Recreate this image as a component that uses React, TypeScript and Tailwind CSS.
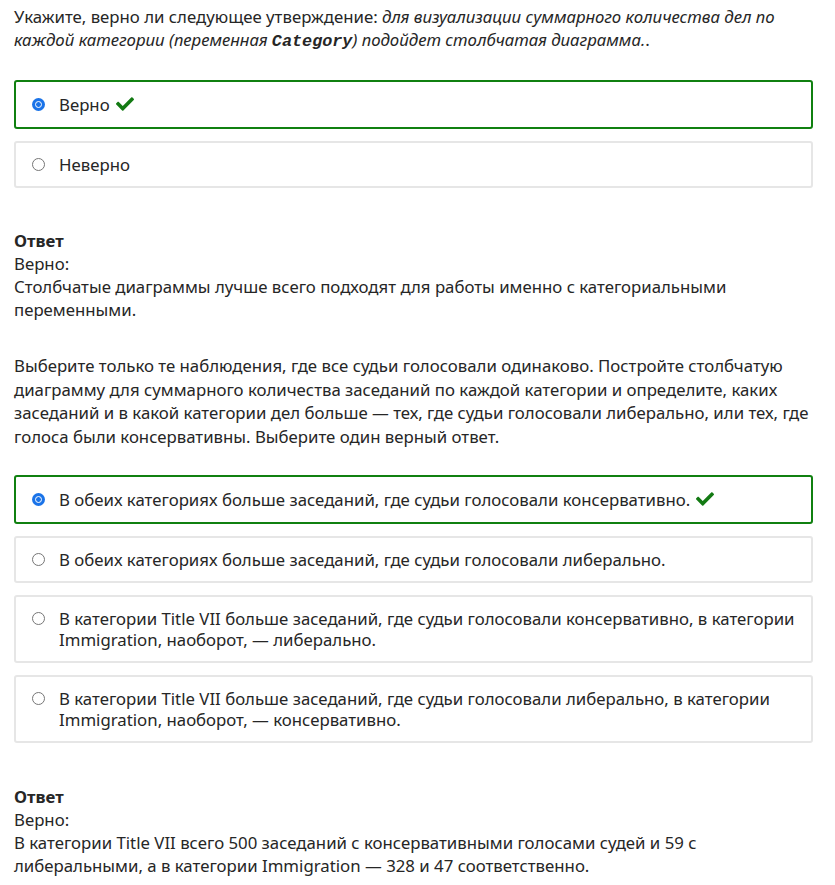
import React from "react";
import { FaCheck } from "react-icons/fa";

type Option = {
  text: string;
  selected?: boolean;
};

function Radio({ checked }: { checked?: boolean }) {
  if (checked) {
    return (
      <span className="mt-[4px] flex h-[13px] w-[13px] shrink-0 items-center justify-center rounded-full bg-[#1a73e8]">
        <span className="h-[7px] w-[7px] rounded-full border-[1.5px] border-white bg-[#1a73e8]" />
      </span>
    );
  }
  return (
    <span className="mt-[4px] h-[13px] w-[13px] shrink-0 rounded-full border border-[#767676] bg-white" />
  );
}

function OptionBox({ option }: { option: Option }) {
  return (
    <div
      className={
        option.selected
          ? "flex items-start gap-[14px] rounded-[3px] border-2 border-[#108010] px-[16px] py-[12px]"
          : "flex items-start gap-[14px] rounded-[3px] border-2 border-[#e6e6e6] px-[16px] py-[11px]"
      }
    >
      <Radio checked={option.selected} />
      <div className="leading-[21px]">
        {option.text}
        {option.selected && (
          <FaCheck className="ml-[6px] inline-block align-[-2px] text-[18px] text-[#137a13]" />
        )}
      </div>
    </div>
  );
}

function Answer({ lines }: { lines: string }) {
  return (
    <div className="leading-[23px]">
      <div className="font-bold">Ответ</div>
      <div>Верно:</div>
      <div>{lines}</div>
    </div>
  );
}

export default function App() {
  const first: Option[] = [{ text: "Верно", selected: true }, { text: "Неверно" }];
  const second: Option[] = [
    {
      text: "В обеих категориях больше заседаний, где судьи голосовали консервативно.",
      selected: true,
    },
    { text: "В обеих категориях больше заседаний, где судьи голосовали либерально." },
    {
      text: "В категории Title VII больше заседаний, где судьи голосовали консервативно, в категории Immigration, наоборот, — либерально.",
    },
    {
      text: "В категории Title VII больше заседаний, где судьи голосовали либерально, в категории Immigration, наоборот, — консервативно.",
    },
  ];

  return (
    <div className="min-h-[885px] bg-white px-[14px] pt-[5px] font-['Noto_Sans',sans-serif] text-[16.8px] text-[#262626]">
      <div className="w-[799px]">
        <p className="leading-[23px]">
          Укажите, верно ли следующее утверждение:{" "}
          <i>
            для визуализации суммарного количества дел по каждой категории (переменная{" "}
            <code className="font-['Liberation_Mono',monospace] font-bold">Category</code>) подойдет
            столбчатая диаграмма.
          </i>
          .
        </p>

        <div className="mt-[27px] flex flex-col gap-[12px]">
          {first.map((o, i) => (
            <OptionBox key={i} option={o} />
          ))}
        </div>

        <div className="mt-[41px]">
          <Answer lines="Столбчатые диаграммы лучше всего подходят для работы именно с категориальными переменными." />
        </div>

        <p className="mt-[33px] leading-[23.5px]">
          Выберите только те наблюдения, где все судьи голосовали одинаково. Постройте столбчатую
          диаграмму для суммарного количества заседаний по каждой категории и определите, каких
          заседаний и в какой категории дел больше — тех, где судьи голосовали либерально, или тех,
          где голоса были консервативны. Выберите один верный ответ.
        </p>

        <div className="mt-[27px] flex flex-col gap-[12px]">
          {second.map((o, i) => (
            <OptionBox key={i} option={o} />
          ))}
        </div>

        <div className="mt-[42px]">
          <Answer lines="В категории Title VII всего 500 заседаний с консервативными голосами судей и 59 с либеральными, а в категории Immigration — 328 и 47 соответственно." />
        </div>
      </div>
    </div>
  );
}
